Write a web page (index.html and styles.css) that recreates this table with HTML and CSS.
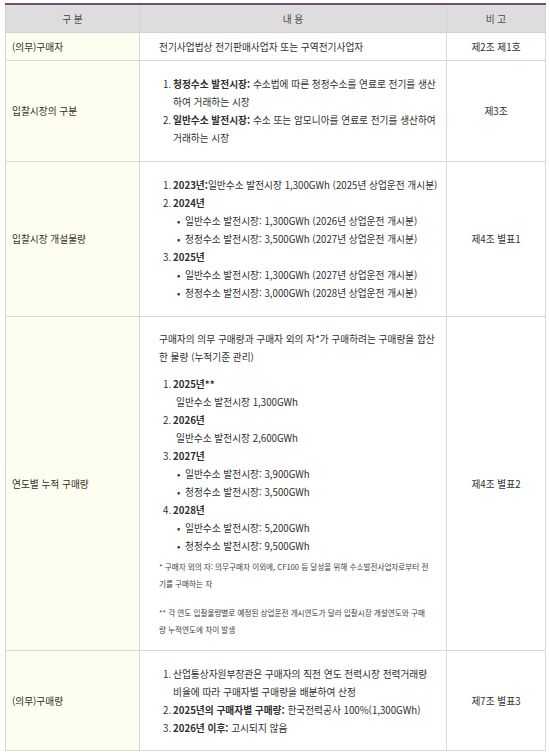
FILE: index.html
```html
<!DOCTYPE html>
<html lang="ko">
<head>
<meta charset="utf-8">
<link rel="stylesheet" href="styles.css">
</head>
<body>
<table class="spec">
  <colgroup><col class="c1"><col class="c2"><col class="c3"></colgroup>
  <thead>
    <tr><th>구 분</th><th>내 용</th><th>비 고</th></tr>
  </thead>
  <tbody>
    <tr class="r1">
      <td class="k">(의무)구매자</td>
      <td class="v">전기사업법상 전기판매사업자 또는 구역전기사업자</td>
      <td class="n">제2조 제1호</td>
    </tr>
    <tr class="r2">
      <td class="k">입찰시장의 구분</td>
      <td class="v">
        <ol class="num">
          <li><span class="mk">1.</span><span class="tx"><b>청정수소 발전시장:</b> 수소법에 따른 청정수소를 연료로 전기를 생산<br>하여 거래하는 시장</span></li>
          <li><span class="mk">2.</span><span class="tx"><b>일반수소 발전시장:</b> 수소 또는 암모니아를 연료로 전기를 생산하여<br>거래하는 시장</span></li>
        </ol>
      </td>
      <td class="n">제3조</td>
    </tr>
    <tr class="r3">
      <td class="k">입찰시장 개설물량</td>
      <td class="v">
        <ol class="num">
          <li><span class="mk">1.</span><span class="tx"><b>2023년:</b>일반수소 발전시장 1,300GWh (2025년 상업운전 개시분)</span></li>
          <li><span class="mk">2.</span><span class="tx"><b>2024년</b>
            <ul class="dot">
              <li>일반수소 발전시장: 1,300GWh (2026년 상업운전 개시분)</li>
              <li>청정수소 발전시장: 3,500GWh (2027년 상업운전 개시분)</li>
            </ul></span></li>
          <li><span class="mk">3.</span><span class="tx"><b>2025년</b>
            <ul class="dot">
              <li>일반수소 발전시장: 1,300GWh (2027년 상업운전 개시분)</li>
              <li>청정수소 발전시장: 3,000GWh (2028년 상업운전 개시분)</li>
            </ul></span></li>
        </ol>
      </td>
      <td class="n">제4조 별표1</td>
    </tr>
    <tr class="r4">
      <td class="k">연도별 누적 구매량</td>
      <td class="v">
        <p class="lead">구매자의 의무 구매량과 구매자 외의 자*가 구매하려는 구매량을 합산<br>한 물량 (누적기준 관리)</p>
        <ol class="num">
          <li><span class="mk">1.</span><span class="tx"><b>2025년**</b><span class="sub">일반수소 발전시장 1,300GWh</span></span></li>
          <li><span class="mk">2.</span><span class="tx"><b>2026년</b><span class="sub">일반수소 발전시장 2,600GWh</span></span></li>
          <li><span class="mk">3.</span><span class="tx"><b>2027년</b>
            <ul class="dot">
              <li>일반수소 발전시장: 3,900GWh</li>
              <li>청정수소 발전시장: 3,500GWh</li>
            </ul></span></li>
          <li><span class="mk">4.</span><span class="tx"><b>2028년</b>
            <ul class="dot">
              <li>일반수소 발전시장: 5,200GWh</li>
              <li>청정수소 발전시장: 9,500GWh</li>
            </ul></span></li>
        </ol>
        <p class="fn">* 구매자 외의 자: 의무구매자 이외에, CF100 등 달성을 위해 수소발전사업자로부터 전<br>기를 구매하는 자</p>
        <p class="fn fn2">** 각 연도 입찰물량별로 예정된 상업운전 개시연도가 달라 입찰시장 개설연도와 구매<br>량 누적연도에 차이 발생</p>
      </td>
      <td class="n">제4조 별표2</td>
    </tr>
    <tr class="r5">
      <td class="k">(의무)구매량</td>
      <td class="v">
        <ol class="num">
          <li><span class="mk">1.</span><span class="tx">산업통상자원부장관은 구매자의 직전 연도 전력시장 전력거래량<br>비율에 따라 구매자별 구매량을 배분하여 산정</span></li>
          <li><span class="mk">2.</span><span class="tx"><b>2025년의 구매자별 구매량:</b> 한국전력공사 100%(1,300GWh)</span></li>
          <li><span class="mk">3.</span><span class="tx"><b>2026년 이후:</b> 고시되지 않음</span></li>
        </ol>
      </td>
      <td class="n">제7조 별표3</td>
    </tr>
  </tbody>
</table>
</body>
</html>
```

FILE: styles.css
```css
html, body {
  margin: 0;
  background: #ffffff;
}
body {
  padding: 3px 0 0 5px;
  font-family: "Noto Sans CJK KR", "Noto Sans", sans-serif;
  color: #2e2e2e;
}
.spec {
  border-collapse: collapse;
  table-layout: fixed;
  width: 540px;
  font-size: 9.7px;
}
.c1 { width: 134px; }
.c2 { width: 307px; }
.c3 { width: 99px; }

.spec th {
  height: 27px;
  padding: 0;
  background: #dddddd;
  color: #484848;
  font-weight: normal;
  border: 1px solid #d2d2d2;
  border-top: 2px solid #6f4f6e;
  box-shadow: inset 0 1px 0 #ecd9ea;
}
.spec td {
  padding: 0;
  border: 1px solid #d8d8d8;
  vertical-align: middle;
  line-height: 18px;
}
.spec td.k {
  background: #fefef0;
  padding-left: 6px;
}
.spec td.v {
  padding: 0 4px 0 19px;
}
.spec td.n {
  text-align: center;
}
.r1 td { height: 27px; }
.r2 td { height: 100px; }
.r3 td { height: 154px; }
.r4 td { height: 333px; }
.r5 td { height: 99px; }

b { font-weight: bold; }

.num {
  list-style: none;
  margin: 0;
  padding: 0 0 0 4px;
}
.num > li {
  display: flex;
}
.mk {
  flex: none;
  width: 10px;
}
.tx {
  display: block;
}
.sub {
  display: block;
  padding-left: 3px;
}
.dot {
  list-style: none;
  margin: 0;
  padding: 0 0 0 4px;
}
.dot li {
  display: flex;
}
.dot li::before {
  content: "•";
  flex: none;
  width: 8px;
}
.lead {
  margin: 0 0 9px 0;
}
.fn {
  margin: 3px 0 0 0;
  font-size: 7.6px;
  line-height: 17px;
  color: #404040;
}
.fn2 {
  margin-top: 12px;
}
```
